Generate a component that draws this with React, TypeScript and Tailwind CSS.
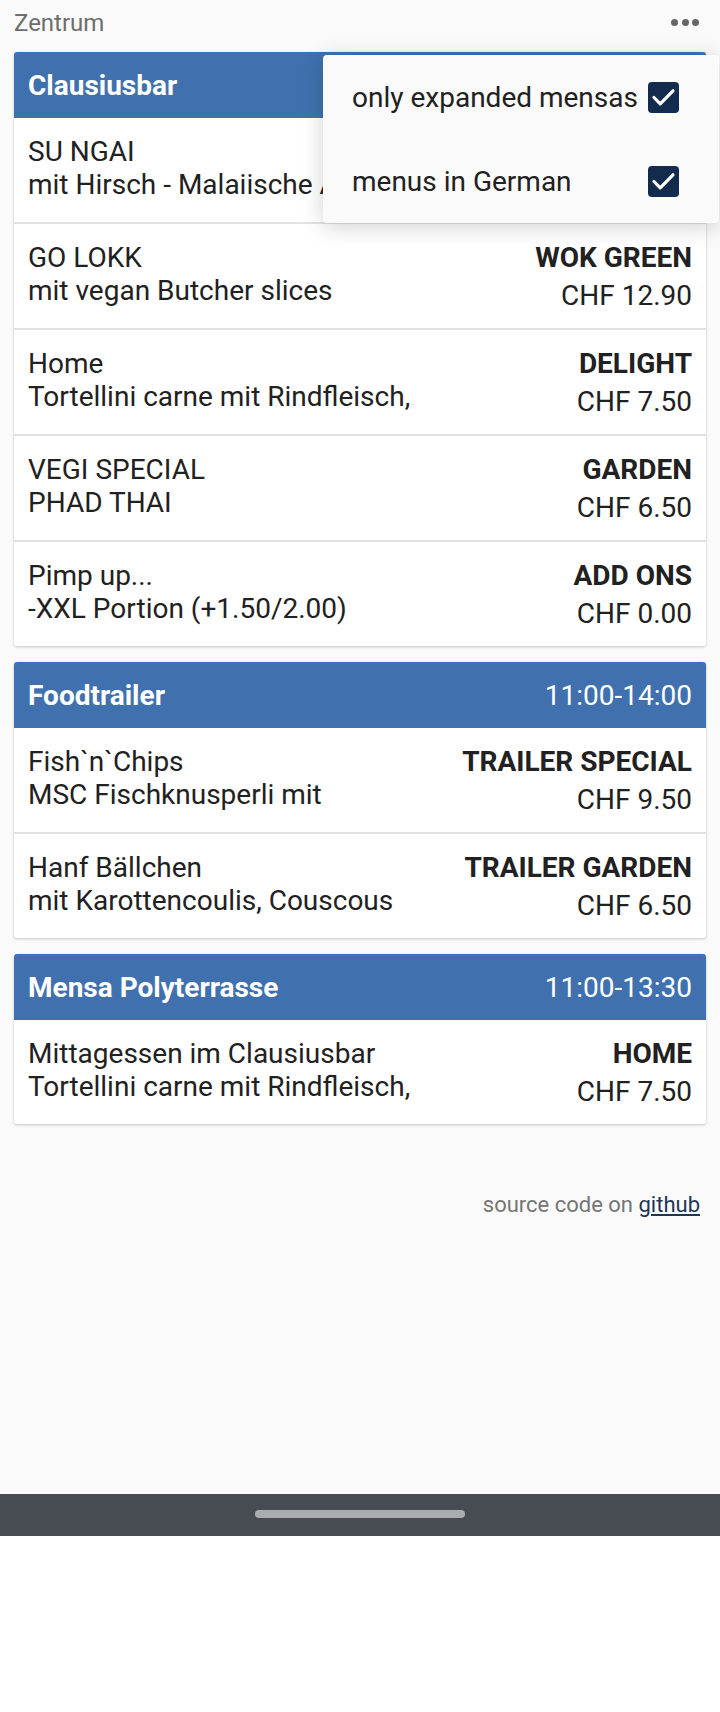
type Menu = {
  name: string;
  description: string;
  category: string;
  price: string;
};

type Mensa = {
  name: string;
  hours: string;
  menus: Menu[];
};

// the first mensa's hours and first price sit under the settings popup, so they are left out
const mensas: Mensa[] = [
  {
    name: 'Clausiusbar',
    hours: '',
    menus: [
      { name: 'SU NGAI', description: 'mit Hirsch - Malaiische Art', category: '', price: '' },
      { name: 'GO LOKK', description: 'mit vegan Butcher slices', category: 'WOK GREEN', price: 'CHF 12.90' },
      { name: 'Home', description: 'Tortellini carne mit Rindfleisch,', category: 'DELIGHT', price: 'CHF 7.50' },
      { name: 'VEGI SPECIAL', description: 'PHAD THAI', category: 'GARDEN', price: 'CHF 6.50' },
      { name: 'Pimp up...', description: '-XXL Portion (+1.50/2.00)', category: 'ADD ONS', price: 'CHF 0.00' },
    ],
  },
  {
    name: 'Foodtrailer',
    hours: '11:00-14:00',
    menus: [
      { name: 'Fish`n`Chips', description: 'MSC Fischknusperli mit', category: 'TRAILER SPECIAL', price: 'CHF 9.50' },
      { name: 'Hanf Bällchen', description: 'mit Karottencoulis, Couscous', category: 'TRAILER GARDEN', price: 'CHF 6.50' },
    ],
  },
  {
    name: 'Mensa Polyterrasse',
    hours: '11:00-13:30',
    menus: [
      {
        name: 'Mittagessen im Clausiusbar',
        description: 'Tortellini carne mit Rindfleisch,',
        category: 'HOME',
        price: 'CHF 7.50',
      },
    ],
  },
];

function Checkbox() {
  return (
    <div className="flex h-[31px] w-[31px] shrink-0 items-center justify-center rounded-[4px] bg-[#132b4d]">
      <svg viewBox="0 0 31 31" className="h-[31px] w-[31px]">
        <polyline
          points="6,15.5 12.2,21.8 25,8.8"
          fill="none"
          stroke="white"
          strokeWidth="3.2"
          strokeLinecap="round"
          strokeLinejoin="round"
        />
      </svg>
    </div>
  );
}

function MensaCard({ mensa }: { mensa: Mensa }) {
  return (
    <div className="overflow-hidden rounded-[3px] bg-white shadow-[0_1px_3px_rgba(0,0,0,0.22)]">
      <div className="flex h-[66px] items-start justify-between bg-[#4071ae] px-[14px] pt-[17px] text-white">
        <span className="font-bold">{mensa.name}</span>
        {mensa.hours && <span>{mensa.hours}</span>}
      </div>
      {mensa.menus.map((menu, index) => (
        <div
          key={index}
          className={`flex items-start justify-between gap-4 px-[14px] pt-[17px] ${
            index > 0 ? 'h-[106px] border-t-2 border-[#e2e2e2]' : 'h-[104px]'
          }`}
        >
          <div className="min-w-0 whitespace-nowrap">
            <p>{menu.name}</p>
            <p>{menu.description}</p>
          </div>
          {menu.category && (
            <div className="shrink-0 whitespace-nowrap text-right">
              <p className="font-bold">{menu.category}</p>
              <p className="mt-[5px]">{menu.price}</p>
            </div>
          )}
        </div>
      ))}
    </div>
  );
}

export default function App() {
  return (
    <div className="relative h-[1712px] w-[720px] overflow-hidden bg-white font-['Roboto',sans-serif] text-[28px] leading-[33px] text-[#212121]">
      <div className="h-[1494px] bg-[#fafafa]">
        <div className="flex h-[52px] items-start justify-between pl-[14px] pr-[21px] pt-[9px]">
          <span className="text-[24px] leading-[28px] text-[#6e6e6e]">Zentrum</span>
          <div className="mt-[10px] flex gap-[3.5px]">
            <span className="h-[7px] w-[7px] rounded-full bg-[#666]"></span>
            <span className="h-[7px] w-[7px] rounded-full bg-[#666]"></span>
            <span className="h-[7px] w-[7px] rounded-full bg-[#666]"></span>
          </div>
        </div>

        <div className="flex flex-col gap-4 px-[14px]">
          {mensas.map((mensa, index) => (
            <MensaCard key={index} mensa={mensa} />
          ))}
        </div>

        <p className="mt-[68px] pr-[20px] text-right text-[22px] leading-[26px] text-[#757575]">
          source code on{' '}
          <a href="#" className="text-[#1c3658] underline">
            github
          </a>
        </p>
      </div>

      <div className="flex h-[42px] justify-center bg-[#464c52] pt-[16px]">
        <div className="h-[8px] w-[210px] rounded-full bg-[#a9adaf]"></div>
      </div>

      <div className="absolute left-[323px] top-[55px] w-[396px] rounded-[4px] bg-[#fafafa] shadow-[0_4px_22px_rgba(0,0,0,0.18)]">
        <div className="flex h-[84px] items-center justify-between pl-[29px] pr-[40px]">
          <span>only expanded mensas</span>
          <Checkbox />
        </div>
        <div className="flex h-[84px] items-center justify-between pl-[29px] pr-[40px]">
          <span>menus in German</span>
          <Checkbox />
        </div>
      </div>
    </div>
  );
}
